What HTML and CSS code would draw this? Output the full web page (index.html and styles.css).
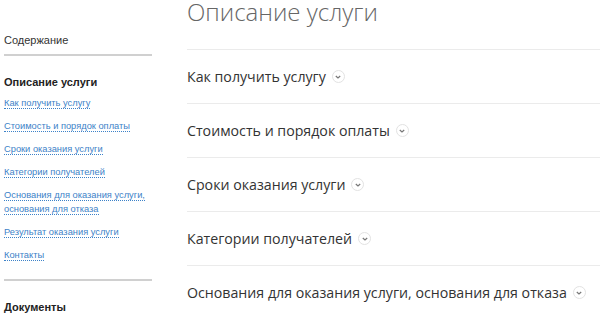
FILE: index.html
```html
<!DOCTYPE html>
<html lang="ru">
<head>
  <meta charset="UTF-8" />
  <title>Описание услуги</title>
  <link rel="stylesheet" href="styles.css">
</head>
<body>
  <div class="page">
    <aside class="sidebar">
      <div class="side-title">Содержание</div>
      <div class="side-group">
        <div class="side-heading">Описание услуги</div>
        <ul class="side-links">
          <li><a href="#">Как получить услугу</a></li>
          <li><a href="#">Стоимость и порядок оплаты</a></li>
          <li><a href="#">Сроки оказания услуги</a></li>
          <li><a href="#">Категории получателей</a></li>
          <li><a href="#">Основания для оказания услуги, основания для отказа</a></li>
          <li><a href="#">Результат оказания услуги</a></li>
          <li><a href="#">Контакты</a></li>
        </ul>
      </div>
      <div class="side-group">
        <div class="side-heading">Документы</div>
      </div>
    </aside>

    <main class="content">
      <h1>Описание услуги</h1>
      <div class="section">
        <span>Как получить услугу</span>
        <span class="toggle"><svg viewBox="0 0 8 8"><path d="M1.8 3 L4 5 L6.2 3" /></svg></span>
      </div>
      <div class="section">
        <span>Стоимость и порядок оплаты</span>
        <span class="toggle"><svg viewBox="0 0 8 8"><path d="M1.8 3 L4 5 L6.2 3" /></svg></span>
      </div>
      <div class="section">
        <span>Сроки оказания услуги</span>
        <span class="toggle"><svg viewBox="0 0 8 8"><path d="M1.8 3 L4 5 L6.2 3" /></svg></span>
      </div>
      <div class="section">
        <span>Категории получателей</span>
        <span class="toggle"><svg viewBox="0 0 8 8"><path d="M1.8 3 L4 5 L6.2 3" /></svg></span>
      </div>
      <div class="section">
        <span>Основания для оказания услуги, основания для отказа</span>
        <span class="toggle"><svg viewBox="0 0 8 8"><path d="M1.8 3 L4 5 L6.2 3" /></svg></span>
      </div>
    </main>
  </div>
</body>
</html>
```

FILE: styles.css
```css
body {
  margin: 0;
  background: #ffffff;
  font-family: 'Liberation Sans', Arial, sans-serif;
  color: #333;
  overflow: hidden;
}

.page {
  display: flex;
  gap: 35px;
  padding-left: 4px;
}

.sidebar {
  width: 148px;
  flex-shrink: 0;
  padding-top: 33px;
}

.side-title {
  font-size: 11px;
  line-height: 14px;
  color: #333;
  padding-bottom: 7px;
  border-bottom: 2px solid #d0d0d0;
}

.side-group {
  padding-top: 19px;
  padding-bottom: 17px;
  border-bottom: 2px solid #d0d0d0;
}

.side-group:last-child {
  border-bottom: none;
  padding-bottom: 0;
}

.side-heading {
  font-size: 11px;
  font-weight: bold;
  line-height: 14px;
  color: #222;
}

.side-links {
  list-style: none;
  margin: 0;
  padding: 0;
}

.side-links li {
  margin-top: 9px;
  font-size: 9.3px;
  line-height: 14px;
}

.side-links li:first-child {
  margin-top: 7px;
}

.side-links a {
  color: #3d82c8;
  text-decoration: none;
  border-bottom: 1px dotted #3d82c8;
}

.content {
  flex: 1;
  font-family: 'Open Sans', sans-serif;
}

.content h1 {
  margin: 0;
  font-size: 24px;
  font-weight: 300;
  line-height: 24px;
  color: #666;
  padding-bottom: 25px;
  border-bottom: 1px solid #ebebeb;
}

.section {
  display: flex;
  align-items: center;
  gap: 6px;
  height: 53px;
  border-bottom: 1px solid #ebebeb;
  font-size: 14.2px;
  color: #333;
}

.toggle {
  width: 11px;
  height: 11px;
  border: 1px solid #e2e2e2;
  border-radius: 50%;
  display: flex;
  align-items: center;
  justify-content: center;
}

.toggle svg {
  width: 8px;
  height: 8px;
  fill: none;
  stroke: #777;
  stroke-width: 1.2;
}
```
